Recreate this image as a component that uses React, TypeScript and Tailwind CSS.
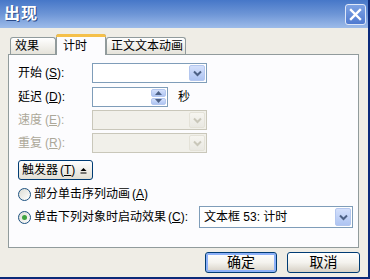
import React from "react";

const FONT = { fontFamily: '"Liberation Sans", "Noto Sans CJK SC", sans-serif' };

function Chevron({ color }: { color: string }) {
  return (
    <svg width="9" height="7" viewBox="0 0 9 7">
      <path d="M1 1.5 L4.5 5 L8 1.5" fill="none" stroke={color} strokeWidth="2" />
    </svg>
  );
}

function DropBtn({ disabled }: { disabled?: boolean }) {
  return disabled ? (
    <div className="w-[16px] h-full flex items-center justify-center rounded-[2px] bg-gradient-to-b from-[#f6f5f0] to-[#e9e8e2] border border-[#e4e2d8]">
      <Chevron color="#c9c7ba" />
    </div>
  ) : (
    <div className="w-[16px] h-full flex items-center justify-center rounded-[2px] bg-gradient-to-b from-[#d4e0fb] to-[#aec4f2] border border-[#b4c7ef]">
      <Chevron color="#4d6185" />
    </div>
  );
}

function Combo({ w, h, disabled, text }: { w: string; h: string; disabled?: boolean; text?: string }) {
  return (
    <div
      className={`${w} ${h} flex items-stretch p-[1px] border ${
        disabled ? "border-[#c9c7ba] bg-[#f1f0ea]" : "border-[#7f9db9] bg-white"
      }`}
    >
      <div className="flex-1 flex items-center pl-[3px] text-[12px] text-black whitespace-nowrap">{text}</div>
      <DropBtn disabled={disabled} />
    </div>
  );
}

function Label({ name, k, disabled }: { name: string; k: string; disabled?: boolean }) {
  return (
    <div className={`w-[74px] text-[12px] ${disabled ? "text-[#aca899]" : "text-black"}`}>
      {name}
      <span className="ml-[3px]">
        (<span className="underline">{k}</span>):
      </span>
    </div>
  );
}

function Radio({ checked }: { checked?: boolean }) {
  return (
    <div className="w-[13px] h-[13px] rounded-full border border-[#1c5180] bg-gradient-to-br from-[#dcdcd4] to-white flex items-center justify-center">
      {checked && <div className="w-[5px] h-[5px] rounded-full bg-[#3fa33f]" />}
    </div>
  );
}

function XpButton({ children, w, def }: { children: React.ReactNode; w: string; def?: boolean }) {
  return (
    <div
      className={`${w} h-[21px] rounded-[3px] border border-[#003c74] bg-gradient-to-b from-white via-[#f4f3ee] to-[#d6d0c5] flex items-center justify-center text-[14px] text-black ${
        def ? "shadow-[inset_0_0_0_2px_#8cb0f8]" : ""
      }`}
    >
      {children}
    </div>
  );
}

export default function App() {
  return (
    <div className="w-[370px] h-[279px] bg-[#efede6] flex flex-col border-r-[2px] border-b-[2px] border-[#0b2a7a] overflow-hidden" style={FONT}>
      {/* Title bar */}
      <div className="h-[28px] shrink-0 bg-gradient-to-b from-[#4677c8] via-[#6d95d6] to-[#9dbbe9] flex items-center justify-between pl-[4px] pr-[2px]">
        <span className="text-white text-[16px] font-bold tracking-[1px] [text-shadow:1px_1px_0_#2a4a8a]">出现</span>
        <div className="w-[21px] h-[21px] rounded-[3px] border border-[#dfe8f8] bg-gradient-to-b from-[#7ea3e4] to-[#4f7ad0] flex items-center justify-center">
          <svg width="13" height="13" viewBox="0 0 13 13">
            <path d="M2 2 L11 11 M11 2 L2 11" stroke="white" strokeWidth="2.4" strokeLinecap="square" />
          </svg>
        </div>
      </div>

      {/* Tabs */}
      <div className="flex items-end pl-[10px] mt-[6px] h-[20px] relative z-10">
        <div className="w-[46px] h-[17px] border border-b-0 border-[#919b9c] bg-gradient-to-b from-white to-[#e5e3da] rounded-t-[3px] text-[12px] flex items-center pl-[4px] text-black">
          效果
        </div>
        <div className="w-[50px] h-[21px] border border-b-0 border-[#919b9c] bg-[#fcfcfe] rounded-t-[3px] text-[12px] flex items-start pt-[2px] pl-[6px] text-black relative -mb-[1px]">
          <div className="absolute -top-[1px] -left-[1px] -right-[1px] h-[3px] rounded-t-[3px] bg-[#f5c04a]" />
          计时
        </div>
        <div className="w-[80px] h-[17px] border border-b-0 border-[#919b9c] bg-gradient-to-b from-white to-[#e5e3da] rounded-t-[3px] text-[12px] flex items-center pl-[4px] text-black">
          正文文本动画
        </div>
      </div>

      {/* Panel */}
      <div className="mx-[8px] w-[351px] h-[194px] border border-[#919b9c] bg-[#fcfcfe] pl-[9px] pt-[8px] flex flex-col">
        <div className="flex items-center h-[20px]">
          <Label name="开始" k="S" />
          <Combo w="w-[115px]" h="h-[20px]" />
        </div>
        <div className="flex items-center h-[20px] mt-[4px]">
          <Label name="延迟" k="D" />
          <div className="w-[76px] h-[20px] border border-[#7f9db9] bg-white flex justify-end p-[1px]">
            <div className="w-[15px] flex flex-col gap-[1px]">
              <div className="flex-1 rounded-[2px] bg-gradient-to-b from-[#d4e0fb] to-[#aec4f2] border border-[#b4c7ef] flex items-center justify-center">
                <svg width="7" height="4" viewBox="0 0 7 4"><path d="M0 4 L3.5 0 L7 4 Z" fill="#4d6185" /></svg>
              </div>
              <div className="flex-1 rounded-[2px] bg-gradient-to-b from-[#d4e0fb] to-[#aec4f2] border border-[#b4c7ef] flex items-center justify-center">
                <svg width="7" height="4" viewBox="0 0 7 4"><path d="M0 0 L3.5 4 L7 0 Z" fill="#4d6185" /></svg>
              </div>
            </div>
          </div>
          <span className="ml-[10px] text-[12px] text-black">秒</span>
        </div>
        <div className="flex items-center h-[20px] mt-[3px]">
          <Label name="速度" k="E" disabled />
          <Combo w="w-[115px]" h="h-[20px]" disabled />
        </div>
        <div className="flex items-center h-[20px] mt-[3px]">
          <Label name="重复" k="R" disabled />
          <Combo w="w-[115px]" h="h-[20px]" disabled />
        </div>

        <div className="mt-[7px]">
          <div className="w-[75px] h-[20px] rounded-[3px] border border-[#003c74] bg-gradient-to-b from-white to-[#e2dfd4] flex items-center pl-[3px] text-[12px] text-black">
            触发器<span className="ml-[2px]">(<span className="underline">T</span>)</span>
            <svg className="ml-[5px]" width="7" height="7" viewBox="0 0 7 7">
              <path d="M0.5 4 L3.5 1 L6.5 4 Z" fill="#000" />
              <rect x="0.5" y="5.5" width="6" height="1" fill="#000" />
            </svg>
          </div>
        </div>

        <div className="flex items-center h-[18px] mt-[5px] gap-[3px] text-[12px] text-black">
          <Radio />
          <span>
            部分单击序列动画<span className="ml-[2px]">(<span className="underline">A</span>)</span>
          </span>
        </div>

        <div className="flex items-center h-[22px] mt-[3px] text-[12px] text-black">
          <div className="flex items-center gap-[3px] w-[181px]">
            <Radio checked />
            <span>
              单击下列对象时启动效果<span className="ml-[2px]">(<span className="underline">C</span>):</span>
            </span>
          </div>
          <Combo w="w-[154px]" h="h-[22px]" text="文本框 53: 计时" />
        </div>
      </div>

      {/* Buttons */}
      <div className="flex justify-end gap-[10px] pr-[8px] mt-[4px]">
        <XpButton w="w-[72px]" def>确定</XpButton>
        <XpButton w="w-[73px]">取消</XpButton>
      </div>
    </div>
  );
}
